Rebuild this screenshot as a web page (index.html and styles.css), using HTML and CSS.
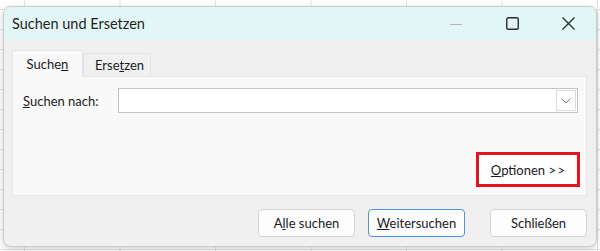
FILE: index.html
```html
<!DOCTYPE html>
<html lang="de">
<head>
    <meta charset="UTF-8">
    <title>Suchen und Ersetzen</title>
    <link rel="stylesheet" href="styles.css">
</head>
<body>
    <div class="dialog">
        <div class="titlebar">
            <span class="title">Suchen und Ersetzen</span>
            <div class="caption-buttons">
                <span class="cap-btn minimize"><svg width="12" height="12" viewBox="0 0 12 12"><path d="M0 6.5h12" stroke="#b4b8b8" stroke-width="1"/></svg></span>
                <span class="cap-btn"><svg width="13" height="13" viewBox="0 0 13 13"><rect x="0.75" y="0.75" width="11.5" height="11.5" rx="1.5" fill="none" stroke="#2b2b2b" stroke-width="1.4"/></svg></span>
                <span class="cap-btn"><svg width="13" height="13" viewBox="0 0 13 13"><path d="M0.5 0.5l12 12M12.5 0.5l-12 12" stroke="#2b2b2b" stroke-width="1.3"/></svg></span>
            </div>
        </div>

        <div class="content">
            <div class="tabs">
                <span class="tab active">Suche<u>n</u></span>
                <span class="tab">Erse<u>t</u>zen</span>
            </div>

            <div class="panel">
                <div class="search-row">
                    <label for="find"><u>S</u>uchen nach:</label>
                    <div class="combo">
                        <input type="text" id="find">
                        <span class="combo-arrow"><svg width="10" height="6" viewBox="0 0 10 6"><path d="M0.5 0.5l4.5 4.5 4.5-4.5" fill="none" stroke="#7a7a7a" stroke-width="1"/></svg></span>
                    </div>
                </div>
                <div class="options-row">
                    <button class="btn options"><u>O</u>ptionen &gt;&thinsp;&gt;</button>
                </div>
            </div>

            <div class="actions">
                <button class="btn">A<u>l</u>le suchen</button>
                <button class="btn default"><u>W</u>eitersuchen</button>
                <button class="btn close">Schließen</button>
            </div>
        </div>
    </div>
</body>
</html>
```

FILE: styles.css
```css
body {
    margin: 0;
    height: 251px;
    overflow: hidden;
    font-family: Lato, "Noto Sans", sans-serif;
    color: #1b1b1b;
    background-color: #ffffff;
    background-image:
        linear-gradient(to right, #e2e2e2 1px, transparent 1px),
        linear-gradient(to bottom, #e2e2e2 1px, transparent 1px);
    background-size: 95.5px 100%, 100% 20px;
    background-position: 24px 0, 0 9px;
}
.dialog {
    margin: 6px 3px 0 3px;
    height: 239px;
    border: 1px solid #c9cccc;
    border-radius: 8px;
    background: #f0f0f0;
    box-shadow: 0 2px 6px rgba(0, 0, 0, 0.18);
    overflow: hidden;
    display: flex;
    flex-direction: column;
}
.titlebar {
    height: 33px;
    background: #e3f6f6;
    display: flex;
    align-items: center;
    justify-content: space-between;
    padding-left: 8px;
}
.title {
    font-size: 14.5px;
    color: #1f1f1f;
}
.caption-buttons {
    display: flex;
    align-items: center;
    height: 100%;
}
.cap-btn {
    width: 56px;
    height: 100%;
    display: flex;
    align-items: center;
    justify-content: center;
}
.content {
    flex: 1;
    padding: 9px 9px 9px 8px;
    display: flex;
    flex-direction: column;
}
.tabs {
    display: flex;
    align-items: flex-end;
    height: 27px;
}
.tab {
    font-size: 13px;
    height: 23px;
    line-height: 22px;
    padding: 0 11px;
    border: 1px solid #e2e2e2;
    border-bottom: none;
    box-sizing: border-box;
    background: #f0f0f0;
    width: 68px;
    text-align: center;
}
.tab.active {
    height: 27px;
    line-height: 26px;
    width: 71px;
    background: #f9f9f9;
    border-color: #e6e6e6;
    position: relative;
    top: 1px;
}
.panel {
    height: 120px;
    box-sizing: border-box;
    background: #f9f9f9;
    border: 1px solid #e6e6e6;
    padding: 11px 8px 8px 10px;
    display: flex;
    flex-direction: column;
    justify-content: space-between;
}
.search-row {
    display: flex;
    align-items: center;
}
.search-row label {
    font-size: 13px;
    width: 95px;
}
.combo {
    flex: 1;
    height: 25px;
    box-sizing: border-box;
    border: 1px solid #c5c5c5;
    background: #fff;
    display: flex;
    align-items: center;
    padding: 0 1px 0 4px;
}
.combo input {
    flex: 1;
    border: none;
    outline: none;
    height: 100%;
    padding: 0;
    background: transparent;
}
.combo-arrow {
    width: 20px;
    height: 21px;
    box-sizing: border-box;
    border: 1px solid #dcdcdc;
    display: flex;
    align-items: center;
    justify-content: center;
}
.options-row {
    display: flex;
    justify-content: flex-end;
    margin-right: -2px;
}
.btn {
    font-family: Lato, "Noto Sans", sans-serif;
    font-size: 13px;
    color: #1b1b1b;
    width: 97px;
    height: 28px;
    background: #fdfdfd;
    border: 1px solid #d3d3d3;
    border-radius: 4px;
    padding: 0;
}
.btn.options {
    width: 104px;
    height: 35px;
    border: 3px solid #e5141f;
    border-radius: 0;
    background: #ffffff;
}
.btn.default {
    border-color: #4f93d6;
}
.actions {
    margin-top: auto;
    display: flex;
    justify-content: flex-end;
    gap: 13px;
}
.btn.close {
    margin-left: 12px;
}
```
